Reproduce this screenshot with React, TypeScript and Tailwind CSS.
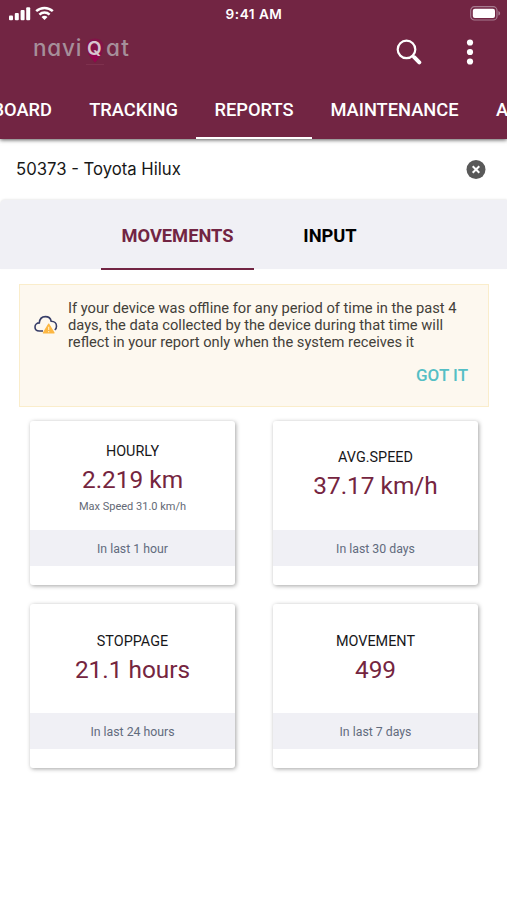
import clsx from "clsx";

interface Stat {
  title: string;
  value: string;
  note?: string;
  period: string;
  contentClass: string;
}

const stats: Stat[] = [
  { title: "HOURLY", value: "2.219 km", note: "Max Speed 31.0 km/h", period: "In last 1 hour", contentClass: "pt-[21px]" },
  { title: "AVG.SPEED", value: "37.17 km/h", period: "In last 30 days", contentClass: "pt-[27px]" },
  { title: "STOPPAGE", value: "21.1 hours", period: "In last 24 hours", contentClass: "pt-[28px]" },
  { title: "MOVEMENT", value: "499", period: "In last 7 days", contentClass: "pt-[28px]" },
];

const navTabs = [
  { label: "DASHBOARD", className: "w-[160px] justify-end pr-[19px]" },
  { label: "TRACKING", className: "w-[125px] justify-center" },
  { label: "REPORTS", className: "w-[116px] justify-center" },
  { label: "MAINTENANCE", className: "w-[165px] justify-center" },
  { label: "ALERTS", className: "w-[110px] pl-[19px]" },
];

const SignalIcon = () => (
  <svg width="22" height="15" viewBox="0 0 22 15" fill="white">
    <rect x="0" y="9.4" width="4" height="4.8" rx="1" />
    <rect x="5.8" y="7" width="4" height="7.2" rx="1" />
    <rect x="11.6" y="4" width="4" height="10.2" rx="1" />
    <rect x="17.2" y="1.2" width="4" height="13" rx="1" />
  </svg>
);

const WifiIcon = () => (
  <svg width="19" height="15" viewBox="0 0 19 15" fill="none" stroke="white" strokeWidth="2.5">
    <path d="M1.2 5.2C5.9 0.8 13.1 0.8 17.8 5.2" />
    <path d="M4.4 8.6C7.3 5.9 11.7 5.9 14.6 8.6" />
    <path d="M9.5 13.9L6.5 10.9C8.2 9.4 10.8 9.4 12.5 10.9Z" fill="white" stroke="none" />
  </svg>
);

const BatteryIcon = () => (
  <svg width="31" height="15" viewBox="0 0 31 15">
    <rect x="0.7" y="0.7" width="26.3" height="13.3" rx="3.8" fill="none" stroke="#a67b8f" strokeWidth="1.2" />
    <rect x="2.8" y="2.7" width="22.2" height="9.4" rx="2" fill="white" />
    <path d="M28.4 5V9.6C30.7 8.7 30.7 5.9 28.4 5Z" fill="#a67b8f" />
  </svg>
);

const Logo = () => (
  <div className="relative h-[34px] w-[100px]">
    <svg className="absolute left-[51px] top-[6px]" width="22" height="30" viewBox="0 0 22 30">
      <path d="M11 0.5C5.7 0.5 2.5 4 2.5 9C2.5 16 11 24.5 11 24.5S19.5 16 19.5 9C19.5 4 16.3 0.5 11 0.5Z" fill="#821348" />
      <path d="M4.5 16L11 24.5L17.5 16L11 14Z" fill="#94064f" />
      <path d="M2 26.5H20" stroke="#7e314e" />
    </svg>
    <div className="relative -top-px flex font-['Inter'] text-[22.5px] leading-[34px] font-medium text-[#a68f9a] [font-feature-settings:'cv11','ss03']">
      <span className="w-[54px] tracking-[0.8px]">navi</span>
      <span className="w-[19px] text-[19px] leading-[35px] font-semibold text-[#d7c5cf]">Q</span>
      <span className="tracking-[1.3px]">at</span>
    </div>
  </div>
);

const SearchIcon = () => (
  <svg width="26" height="26" viewBox="0 0 26 26" fill="none" stroke="white">
    <circle cx="10.5" cy="10.4" r="8.8" strokeWidth="2.2" />
    <path d="M16.5 16.8L18 18.3" strokeWidth="2.4" />
    <path d="M18.4 18.4L23.3 23.3" strokeWidth="4" strokeLinecap="round" />
  </svg>
);

const MoreIcon = () => (
  <svg width="8" height="26" viewBox="0 0 8 26" fill="white">
    <circle cx="4" cy="3.5" r="3.1" />
    <circle cx="4" cy="13" r="3.1" />
    <circle cx="4" cy="22.5" r="3.1" />
  </svg>
);

const CloudWarningIcon = () => (
  <svg width="24" height="20" viewBox="0 0 24 20" fill="none">
    <path
      d="M9 16H5.3C2.8 16 1 14.3 1 12C1 9.5 3 7.9 5.3 7.9C5.6 4 8 1.6 11.4 1.6C14.4 1.6 16.7 3.5 17.2 6.3C20.3 6.3 22.5 8.3 22.5 11.2C22.5 12.8 21.8 14.2 20.8 15"
      stroke="#383e68"
      strokeWidth="1.6"
    />
    <path d="M14.7 9.1L20 17.9H9.4Z" fill="#fcb743" stroke="#fcb743" strokeWidth="1.2" strokeLinejoin="round" />
    <path d="M14.7 11.8V15M14.7 16.1V17.2" stroke="#fff0cc" strokeWidth="1.1" />
  </svg>
);

const StatCard = ({ title, value, note, period, contentClass }: Stat) => (
  <article className="flex h-[164px] flex-col overflow-hidden rounded-[3px] bg-white text-center shadow-[1px_1px_4px_rgba(0,0,0,0.36)]">
    <div className={clsx("h-[109px] shrink-0", contentClass)}>
      <h2 className="text-[14.4px] leading-5 text-[#17171a]">{title}</h2>
      <p className="text-[24.4px] leading-9 text-[#75253f]">{value}</p>
      {note && <p className="text-[11px] leading-[18px] text-[#636975]">{note}</p>}
    </div>
    <div className="h-9 bg-[#f0f0f5] pt-px text-[12.3px] leading-9 text-[#626b7d]">{period}</div>
  </article>
);

const App = () => (
  <div className="h-[900px] w-[507px] overflow-hidden bg-white font-['Roboto',sans-serif]">
    <header className="relative h-[139px] bg-[#722543] text-white shadow-[0_1px_4px_rgba(0,0,0,0.65)]">
      <div className="grid h-[27px] grid-cols-3 items-center pl-[9px] pr-[6px]">
        <div className="flex items-center gap-[4px]">
          <SignalIcon />
          <WifiIcon />
        </div>
        <span className="pt-[2px] pr-[2px] text-center font-['Inter'] text-[13.6px] font-semibold tracking-[0.5px]">9:41 AM</span>
        <div className="flex justify-end">
          <BatteryIcon />
        </div>
      </div>
      <div className="flex h-[53px] items-center px-[33px]">
        <div className="mb-[10px]">
          <Logo />
        </div>
        <button className="mr-[44px] -mt-[4px] ml-auto" aria-label="Search">
          <SearchIcon />
        </button>
        <button className="-mt-[4px]" aria-label="More">
          <MoreIcon />
        </button>
      </div>
      <nav className="-ml-[89px] flex h-[59px] w-[700px]">
        {navTabs.map((tab) => (
          <button
            key={tab.label}
            className={clsx(
              "flex shrink-0 items-center border-b-2 pt-[2px] text-[18.3px] font-medium",
              tab.className,
              tab.label === "REPORTS" ? "border-white" : "border-transparent"
            )}
          >
            {tab.label}
          </button>
        ))}
      </nav>
    </header>

    <div className="flex h-[61px] items-center justify-between pl-[16px] pr-[21px]">
      <span className="pt-px font-['Inter'] text-[16.7px] text-[#171717]">50373 - Toyota Hilux</span>
      <button aria-label="Clear">
        <svg width="20" height="20" viewBox="0 0 20 20">
          <circle cx="10" cy="9.5" r="9.5" fill="#595959" />
          <path d="M6.7 6.2L13.3 12.8M13.3 6.2L6.7 12.8" stroke="white" strokeWidth="2" />
        </svg>
      </button>
    </div>

    <div className="flex h-[69px] rounded-tl-[5px] bg-[#f0f0f5] pl-[101px] text-[18.3px] font-bold shadow-[0_-1px_2px_rgba(0,0,0,0.08)]">
      <button className="h-[70px] w-[153px] border-b-[2.5px] border-[#722543] pt-[3px] text-[#722543]">MOVEMENTS</button>
      <button className="h-[70px] w-[152px] border-b-[2.5px] border-transparent pt-[3px] text-black">INPUT</button>
    </div>

    <main className="pt-[15px]">
      <section className="mr-[18px] ml-[19px] flex h-[123px] border border-[#faedcb] bg-[#fdf8ef] pl-[14px]">
        <div className="mt-[30px] w-[34px]">
          <CloudWarningIcon />
        </div>
        <div className="w-[400px] pt-[15px]">
          <p className="text-[14.7px] leading-[17px] whitespace-nowrap text-[#434039]">
            If your device was offline for any period of time in the past 4
            <br />
            days, the data collected by the device during that time will
            <br />
            reflect in your report only when the system receives it
          </p>
          <button className="mt-[14px] ml-auto block text-[17px] leading-5 font-medium text-[#55bfc5]">GOT IT</button>
        </div>
      </section>
      <section className="mt-[14px] grid grid-cols-2 gap-x-[38px] gap-y-[19px] pr-[29px] pl-[30px]">
        {stats.map((stat) => (
          <StatCard key={stat.title} {...stat} />
        ))}
      </section>
    </main>
  </div>
);

export default App;
